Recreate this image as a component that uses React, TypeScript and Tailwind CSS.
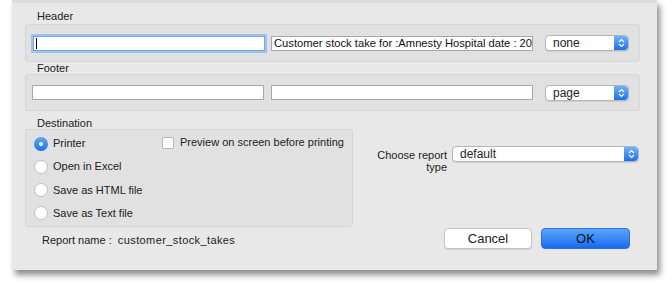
import React from "react";

const font = { fontFamily: '"Liberation Sans", Arial, sans-serif' };

function Stepper() {
  return (
    <div className="absolute right-0 top-0 bottom-0 w-[14px] rounded-r-[4px] bg-gradient-to-b from-[#6cb3fa] to-[#1a6ff0] flex items-center justify-center">
      <svg width="7" height="10" viewBox="0 0 7 10">
        <path d="M1 4 L3.5 1.5 L6 4" stroke="white" strokeWidth="1.2" fill="none" />
        <path d="M1 6 L3.5 8.5 L6 6" stroke="white" strokeWidth="1.2" fill="none" />
      </svg>
    </div>
  );
}

function Select({ value, w }: { value: string; w: string }) {
  return (
    <div className={`relative h-[16px] ${w} rounded-[4px] bg-white border border-[#b5b5b5] shadow-[0_1px_0_rgba(0,0,0,0.08)] pl-[7px] text-[12px] leading-[14px] text-[#222]`}>
      {value}
      <Stepper />
    </div>
  );
}

function Radio({ checked, label }: { checked?: boolean; label: string }) {
  return (
    <div className="flex items-center h-[13px]">
      {checked ? (
        <div className="w-[14px] h-[14px] rounded-full bg-gradient-to-b from-[#5aa8f8] to-[#1c72ee] flex items-center justify-center">
          <div className="w-[4px] h-[4px] rounded-full bg-white" />
        </div>
      ) : (
        <div className="w-[14px] h-[14px] rounded-full bg-white border border-[#c0c0c0]" />
      )}
      <span className="ml-[5px] text-[11px] text-[#222] whitespace-nowrap">{label}</span>
    </div>
  );
}

export default function App() {
  return (
    <div className="w-[672px] h-[283px] bg-white relative overflow-hidden" style={font}>
      <div className="ml-[12px] w-[645px] h-[270px] bg-[#e8e8e8] border-t-[3px] border-[#dcdcdc] shadow-[3px_5px_6px_rgba(0,0,0,0.45)] pl-[13px] pt-[7px]">
        <div className="ml-[12px] text-[11px] leading-[12px] text-[#222]">Header</div>
        <div className="mt-[2px] w-[615px] h-[38px] bg-[#e1e1e1] border border-[#d6d6d6] rounded-[3px] flex items-center pl-[7px]">
          <div className="w-[232px] h-[15px] bg-white border border-[#7aa7e0] shadow-[0_0_0_2px_#9ec2f0] flex items-center pl-[2px]">
            <div className="w-px h-[11px] bg-black" />
          </div>
          <div className="ml-[6px] w-[262px] h-[15px] bg-white border border-[#a8a8a8] pl-[2px] text-[11.2px] leading-[13px] text-[#111] overflow-hidden whitespace-nowrap">
            Customer stock take for :Amnesty Hospital date : 20/
          </div>
          <div className="ml-[12px]">
            <Select value="none" w="w-[84px]" />
          </div>
        </div>
        <div className="ml-[12px] text-[11px] leading-[12px] text-[#222]">Footer</div>
        <div className="w-[615px] h-[37px] bg-[#e1e1e1] border border-[#d6d6d6] rounded-[3px] flex items-center pl-[6px]">
          <div className="w-[232px] h-[15px] bg-white border border-[#a8a8a8]" />
          <div className="ml-[7px] w-[262px] h-[15px] bg-white border border-[#a8a8a8]" />
          <div className="ml-[12px]">
            <Select value="page" w="w-[84px]" />
          </div>
        </div>
        <div className="flex">
          <div className="flex flex-col">
            <div className="ml-[12px] mt-[6px] text-[11px] leading-[12px] text-[#222]">Destination</div>
            <div className="w-[328px] h-[98px] bg-[#e1e1e1] border border-[#d6d6d6] rounded-[3px] flex pl-[8px] pt-[7px]">
              <div className="flex flex-col gap-[10.2px] w-[128px]">
                <Radio checked label="Printer" />
                <Radio label="Open in Excel" />
                <Radio label="Save as HTML file" />
                <Radio label="Save as Text file" />
              </div>
              <div className="flex items-center h-[13px] -mt-[1px]">
                <div className="w-[12px] h-[12px] bg-white border border-[#b8b8b8] rounded-[2px]" />
                <span className="ml-[6px] text-[11px] text-[#222] whitespace-nowrap">Preview on screen before printing</span>
              </div>
            </div>
            <div className="ml-[17px] mt-[5px] text-[11px] text-[#222] whitespace-nowrap">
              Report name :&nbsp;&nbsp;<span className="tracking-[0.4px]">customer_stock_takes</span>
            </div>
          </div>
          <div className="flex flex-col flex-1">
            <div className="flex mt-[35px]">
              <div className="w-[94px] text-[11px] leading-[12px] text-[#222] text-right pt-[3px]">
                Choose report
                <br />
                type
              </div>
              <div className="ml-[5px]">
                <Select value="default" w="w-[187px]" />
              </div>
            </div>
            <div className="flex mt-[55px] pl-[91px] gap-[9px]">
              <div className="w-[88px] h-[21px] bg-white border border-[#c4c4c4] rounded-[4px] flex items-center justify-center text-[13px] text-[#222] shadow-[0_1px_0_rgba(0,0,0,0.1)]">
                Cancel
              </div>
              <div className="w-[89px] h-[21px] rounded-[4px] bg-gradient-to-b from-[#5aa6fb] to-[#1568f0] border border-[#2a74e0] flex items-center justify-center text-[13px] text-[#111]">
                OK
              </div>
            </div>
          </div>
        </div>
      </div>
    </div>
  );
}
